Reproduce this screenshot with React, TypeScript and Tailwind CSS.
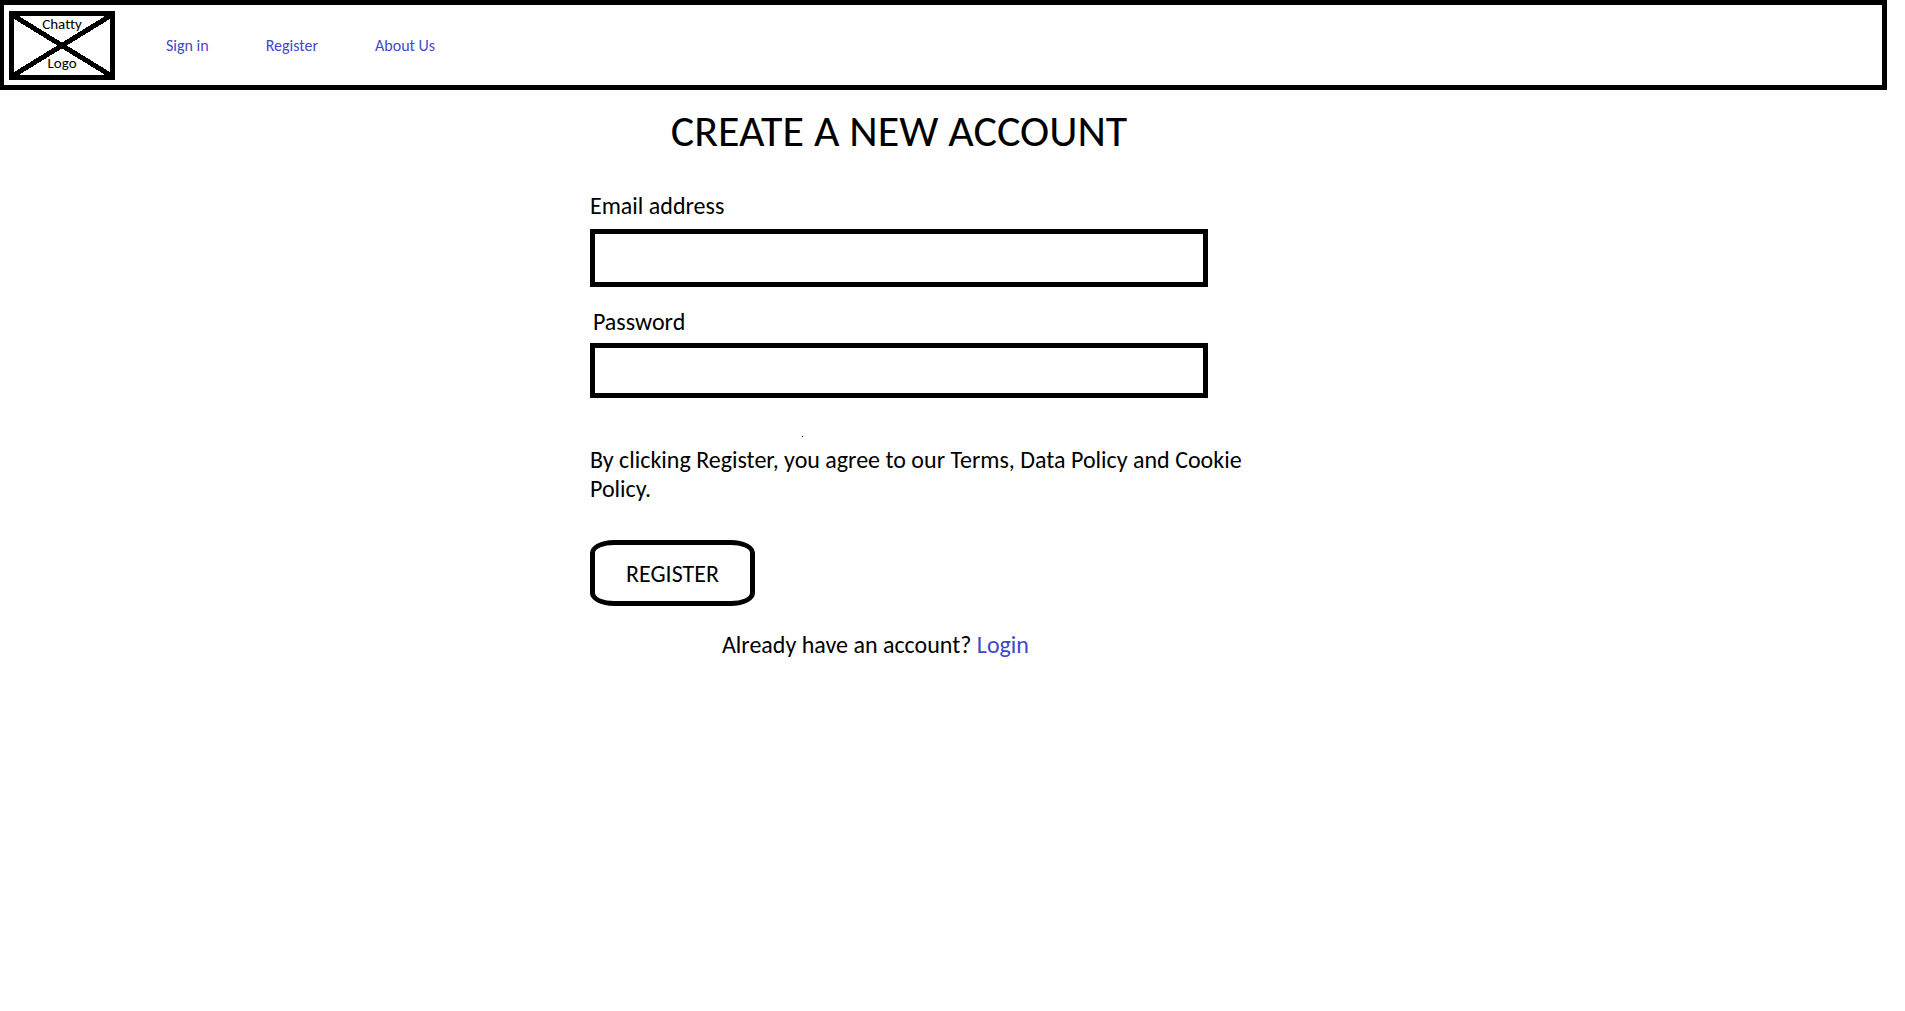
const navLinks = ["Sign in", "Register", "About Us"];

function Logo() {
  return (
    <a
      href="#home"
      className="relative flex h-[69px] w-[106px] shrink-0 flex-col items-center justify-between border-5 border-black pb-[3px] text-[15px] leading-[17px]"
    >
      <svg
        className="absolute inset-0 h-full w-full"
        viewBox="0 0 96 59"
        preserveAspectRatio="none"
        aria-hidden="true"
        shapeRendering="crispEdges"
      >
        <path d="M0 0L96 59M96 0L0 59" stroke="black" strokeWidth="5" />
      </svg>
      <span className="relative">Chatty</span>
      <span className="relative">Logo</span>
    </a>
  );
}

export default function App() {
  return (
    <div className="min-h-screen bg-white pr-[18px] font-['Calibri','Carlito','Lato',sans-serif] text-[24px] leading-[29px] text-black [font-variant-ligatures:none]">
      <header className="flex h-[90px] items-center border-5 border-l-4 border-black pt-px pl-[5px]">
        <Logo />
        <nav className="ml-[51px] flex gap-[57px] text-[16px] leading-5 text-[#3f48cc]">
          {navLinks.map((label) => (
            <a key={label} href="#" className="hover:underline">
              {label}
            </a>
          ))}
        </nav>
      </header>

      <main className="ml-[31%] max-w-[680px] pt-[17px] pl-[5px]">
        <form onSubmit={(e) => e.preventDefault()}>
          <h1 className="max-w-[618px] text-center text-[44px] leading-[48px]">
            CREATE A NEW ACCOUNT
          </h1>
          <label htmlFor="email" className="mt-9 block">
            Email address
          </label>
          <input
            id="email"
            type="email"
            className="mt-[9px] block h-[58px] w-full max-w-[618px] border-5 border-black px-3 outline-none"
          />
          <label htmlFor="password" className="mt-5 block pl-[3px]">
            Password
          </label>
          <input
            id="password"
            type="password"
            className="mt-[7px] block h-[55px] w-full max-w-[618px] border-5 border-black px-3 outline-none"
          />
          <div className="mt-[38px] ml-[212px] size-px bg-black" />
          <p className="mt-2">
            By clicking Register, you agree to our Terms, Data Policy and Cookie
            Policy.
          </p>
          <button
            type="submit"
            className="mt-[37px] block h-[66px] w-[165px] rounded-[24px/13px] border-5 border-black"
          >
            REGISTER
          </button>
        </form>
        <p className="mt-6 pl-[132px]">
          Already have an account?{" "}
          <a href="#login" className="text-[#3f48cc] hover:underline">
            Login
          </a>
        </p>
      </main>
    </div>
  );
}
